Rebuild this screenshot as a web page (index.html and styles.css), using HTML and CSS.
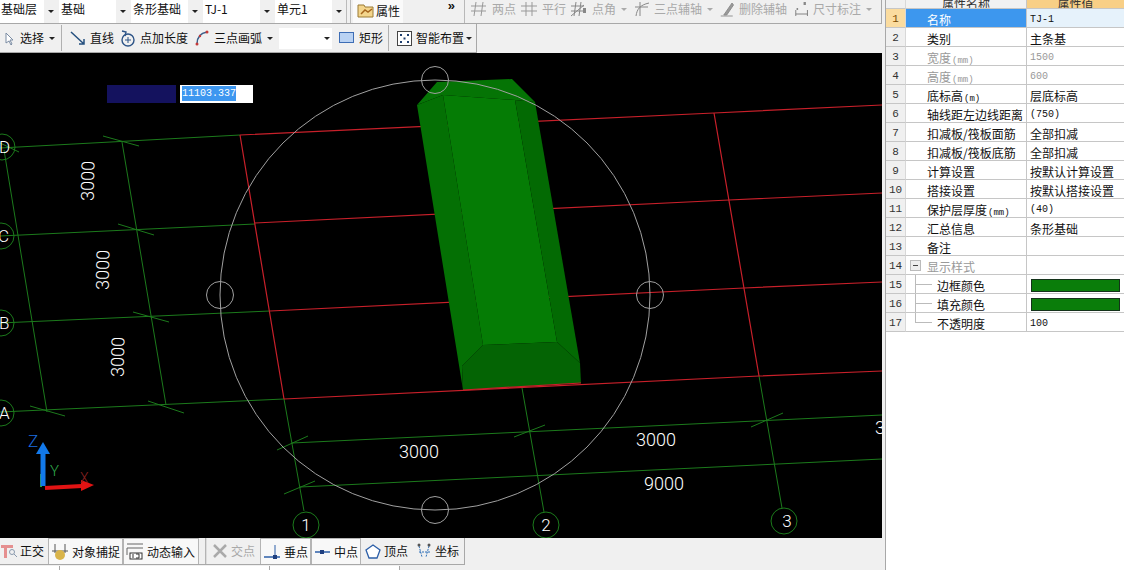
FILE: index.html
```html
<!DOCTYPE html>
<html lang="zh">
<head>
    <meta charset="UTF-8">
    <meta name="viewport" content="width=device-width, initial-scale=1.0">
    <title>条形基础</title>
    <link rel="stylesheet" href="styles.css">
</head>
<body>
<div class="app">
    <div class="main">
        <div class="bar bar-top">
            <div class="combo first"><span class="combo-text">基础层</span><i class="caret"></i></div>
            <div class="combo"><span class="combo-text">基础</span><i class="caret"></i></div>
            <div class="combo"><span class="combo-text">条形基础</span><i class="caret"></i></div>
            <div class="combo"><span class="combo-text">TJ-1</span><i class="caret"></i></div>
            <div class="combo"><span class="combo-text">单元1</span><i class="caret"></i></div>
            <div class="grip"></div>
            <div class="prop-btn">
                <svg width="18" height="15" viewBox="0 0 18 15"><path d="M1 2h6l1 2h8v10H1z" fill="#f3d58c" stroke="#9a7b35"/><path d="M4 11l4-4 3 2 4-3" fill="none" stroke="#a5651d" stroke-width="1.5"/></svg>
                <span>属性</span>
            </div>
            <div class="more">»</div>
            <div class="axis-tools">
                <div class="tool off w50">
                    <svg width="18" height="16" viewBox="0 0 18 16"><path d="M1 5h15M1 10h15M6 1L4 15M13 1l-2 14" stroke="#999" fill="none"/></svg>
                    <span>两点</span>
                </div>
                <div class="tool off w50">
                    <svg width="18" height="16" viewBox="0 0 18 16"><path d="M1 5h16M1 10h16M6 1v14M12 1v14" stroke="#999" fill="none"/></svg>
                    <span>平行</span>
                </div>
                <div class="tool off w64">
                    <svg width="18" height="16" viewBox="0 0 18 16"><path d="M1 5h13M1 10h13M6 1L4 15M11 1L9 15M1 15L14 4" stroke="#888" fill="none"/><rect x="13" y="7" width="3" height="5" fill="#888"/></svg>
                    <span>点角</span><i class="caret pale"></i>
                </div>
                <div class="tool off w86">
                    <svg width="16" height="16" viewBox="0 0 16 16"><path d="M2 15C3 8 6 4 15 2M6 1v14M1 6h13" stroke="#888" fill="none"/></svg>
                    <span>三点辅轴</span><i class="caret pale"></i>
                </div>
                <div class="tool off w75">
                    <svg width="15" height="16" viewBox="0 0 20 16" preserveAspectRatio="none"><path d="M1 15h16M5 14L16 2l2 2L9 14z" fill="#999" stroke="#888"/></svg>
                    <span>删除辅轴</span>
                </div>
                <div class="tool off w80">
                    <svg width="14" height="16" viewBox="0 0 18 16" preserveAspectRatio="none"><path d="M1 9v6M16 9v6M1 13h15" stroke="#777" fill="none"/><rect x="11" y="1" width="3" height="3" fill="#888"/><rect x="2" y="7" width="2" height="2" fill="#888"/></svg>
                    <span>尺寸标注</span><i class="caret pale"></i>
                </div>
            </div>
        </div>

        <div class="bar bar-draw">
            <div class="tool w58">
                <svg width="12" height="15" viewBox="0 0 12 15"><path d="M3 2v10l3-2 2 4 1-1-2-4h3z" fill="#fff" stroke="#7b8ca3"/></svg>
                <span class="ml1">选择</span><i class="caret"></i>
            </div>
            <div class="sep"></div>
            <div class="tool w50">
                <svg width="16" height="16" viewBox="0 0 16 16"><path d="M1 2l13 12M14 9v5H9" fill="none" stroke="#25507f" stroke-width="1.5"/></svg>
                <span>直线</span>
            </div>
            <div class="tool w75">
                <svg width="16" height="17" viewBox="0 0 16 17"><circle cx="8" cy="10" r="6" fill="none" stroke="#2d5487" stroke-width="1.4"/><path d="M5 10h6M8 7v6" stroke="#2d5487"/><path d="M2 1l4 1-1 4" fill="none" stroke="#2d5487" stroke-width="1.4"/></svg>
                <span>点加长度</span>
            </div>
            <div class="tool w84">
                <svg width="14" height="16" viewBox="0 0 14 16"><path d="M2 14C2 7 6 3 12 2" fill="none" stroke="#3b5f8a" stroke-width="1.5"/><circle cx="2" cy="14" r="1.5" fill="#c43a3a"/><circle cx="12" cy="2" r="1.5" fill="#c43a3a"/><circle cx="5" cy="6" r="1.2" fill="#c43a3a"/></svg>
                <span class="ml1">三点画弧</span><i class="caret"></i>
            </div>
            <div class="combo small"><span class="combo-text"></span><i class="caret"></i></div>
            <div class="tool w49">
                <svg width="16" height="12" viewBox="0 0 16 12"><rect x=".5" y=".5" width="14" height="10" fill="#b9d2f3" stroke="#3d6db5"/></svg>
                <span>矩形</span>
            </div>
            <div class="sep"></div>
            <div class="tool w84">
                <svg width="15" height="15" viewBox="0 0 15 15"><rect x=".5" y=".5" width="14" height="14" fill="#fff" stroke="#444"/><path d="M3 3h2v2H3zM10 3h2v2h-2zM6.500 6.500h2v2h-2zM3 10h2v2H3zM10 10h2v2h-2z" fill="#1f3f6f"/></svg>
                <span>智能布置</span><i class="caret tight"></i>
            </div>
        </div>

        <div class="canvas">
            <svg class="scene" width="882" height="485" viewBox="0 53 882 485">
                <g class="axis-green">
                    <path d="M0 148L240 135M0 236L255 224M0 323L270 311M0 412L284 399"/>
                    <path d="M4 150L47 412M122 142L166 405"/>
                    <path d="M0 143L19 152M103 136L139 146M118 224L154 235M133 312L169 322M148 401L184 413M30 406L65 416"/>
                    <path d="M284 399L304 511M522 388L544 512M759 376L782 508"/>
                    <path d="M292 443L882 415M300 487L882 459"/>
                    <path d="M277 450L308 436M514 437L545 425M751 427L783 413M284 494L315 481"/>
                    <circle cx="2" cy="147" r="13"/>
                    <circle cx="1" cy="236" r="13"/>
                    <circle cx="1" cy="323" r="13"/>
                    <circle cx="1" cy="413" r="13"/>
                    <circle cx="306" cy="525" r="13"/>
                    <circle cx="546" cy="525" r="13"/>
                    <circle cx="784" cy="521" r="13"/>
                </g>
                <g class="axis-red">
                    <path d="M240 135L714 113L882 105M255 223L729 200L882 193M270 311L744 288L882 282M284 399L759 376L882 371"/>
                    <path d="M240 135L284 399M714 113L759 376"/>
                </g>
                <g class="solid">
                    <polygon class="f-top" points="417,105 437,82 512,79 535,102 515,100 443,95"/>
                    <polygon class="f-left" points="417,105 443,95 483,345 462,366 463,390"/>
                    <polygon class="f-mid" points="443,95 515,100 557,342 483,345"/>
                    <polygon class="f-right" points="515,100 535,102 580,363 557,342"/>
                    <polygon class="f-end" points="483,345 557,342 580,363 581,383 463,390 462,366"/>
                </g>
                <path class="axis-red" d="M463 390L581 383"/>
                <g class="snap">
                    <circle cx="435" cy="295" r="215"/>
                    <circle cx="435" cy="80" r="13.500"/>
                    <circle cx="435" cy="510" r="13.500"/>
                    <circle cx="220" cy="295" r="13.500"/>
                    <circle cx="650" cy="295" r="13.500"/>
                </g>
                <g class="dim">
                    <text x="419" y="458" text-anchor="middle">3000</text>
                    <text x="656" y="446" text-anchor="middle">3000</text>
                    <text x="664" y="490" text-anchor="middle">9000</text>
                    <text x="875" y="434">3</text>
                    <text transform="translate(94 181) rotate(-89)" text-anchor="middle">3000</text>
                    <text transform="translate(109 270) rotate(-89)" text-anchor="middle">3000</text>
                    <text transform="translate(124 357) rotate(-89)" text-anchor="middle">3000</text>
                </g>
                <g class="bubble">
                    <text x="-1" y="153">D</text>
                    <text x="-2" y="242">C</text>
                    <text x="-1" y="329">B</text>
                    <text x="-1" y="419">A</text>
                    <text x="306" y="531" text-anchor="middle">1</text>
                    <text x="546" y="531" text-anchor="middle">2</text>
                    <text x="787" y="527" text-anchor="middle">3</text>
                </g>
                <g>
                    <path d="M41 474v13" stroke="#2ea32e" stroke-width="2"/>
                    <path d="M43 486V452" stroke="#1279ea" stroke-width="5"/>
                    <path d="M43 442L36 454H50z" fill="#1279ea"/>
                    <path d="M45 488L82 486" stroke="#e21313" stroke-width="4"/>
                    <path d="M81 480L94 485L81 491z" fill="#e21313"/>
                    <text class="gizmo-z" x="28" y="447">Z</text>
                    <text class="gizmo-y" x="50" y="476">Y</text>
                    <text class="gizmo-x" x="80" y="483">X</text>
                </g>
            </svg>
            <div class="coord">
                <div class="coord-label"></div>
                <div class="coord-input"><span>11103.337</span></div>
            </div>
        </div>

        <div class="statusbar">
            <div class="stat first w48">
                <svg width="18" height="16" viewBox="0 0 18 16"><path d="M1 2h12v3H1zM4 5h3v10H4z" fill="#e58f8f"/><circle cx="12" cy="9" r="2.500" fill="none" stroke="#8a9aae"/><path d="M14 11l3 3" stroke="#8a9aae"/></svg>
                <span>正交</span>
            </div>
            <div class="stat on w75">
                <svg width="18" height="18" viewBox="0 0 18 18"><path d="M4 1v9M14 1v9M1 8h16" stroke="#555" fill="none"/><circle cx="9" cy="12" r="5" fill="#d9b44a"/></svg>
                <span>对象捕捉</span>
            </div>
            <div class="stat on w76">
                <svg width="18" height="17" viewBox="0 0 18 17"><path d="M1 1h16M1 5h16M1 5v7" stroke="#666" fill="none"/><rect x="4" y="10" width="12" height="6" fill="#fff" stroke="#333"/><path d="M7 11v4M10 11h3v4h-3" stroke="#333" fill="none"/></svg>
                <span>动态输入</span>
            </div>
            <div class="stat-sep"></div>
            <div class="stat off w50">
                <svg width="16" height="16" viewBox="0 0 16 16"><path d="M2 2l12 12M14 2L2 14" stroke="#aaa" stroke-width="2.500"/></svg>
                <span>交点</span>
            </div>
            <div class="stat on w51">
                <svg width="18" height="16" viewBox="0 0 18 16"><path d="M1 13h16" stroke="#2d5fa8" stroke-width="1.500"/><path d="M12 1v14" stroke="#2d5fa8"/><rect x="10" y="11" width="4" height="4" fill="#1f3f7f"/></svg>
                <span>垂点</span>
            </div>
            <div class="stat on w50">
                <svg width="17" height="8" viewBox="0 0 17 8"><path d="M1 4h15" stroke="#2d5fa8" stroke-width="1.500"/><rect x="6" y="2" width="4" height="4" fill="#1f3f7f"/></svg>
                <span>中点</span>
            </div>
            <div class="stat w52 pl4">
                <svg width="16" height="15" viewBox="0 0 16 15"><path d="M8 1l7 5-3 8H4L1 6z" fill="#fff" stroke="#2d5fa8" stroke-width="1.300"/></svg>
                <span>顶点</span>
            </div>
            <div class="stat w50 last">
                <svg width="16" height="16" viewBox="0 0 16 16"><path d="M3 3l3 11M13 3l-3 11M3 9h11" stroke="#2d6fb8" stroke-dasharray="2 1" fill="none"/><circle cx="3" cy="2" r="1.500" fill="#555"/><circle cx="13" cy="2" r="1.500" fill="#555"/></svg>
                <span>坐标</span>
            </div>
        </div>
        <div class="strip">
            <div class="strip-cell w60"></div>
            <div class="strip-cell w210"></div>
            <div class="strip-cell w130"></div>
        </div>
    </div>

    <div class="panel">
        <div class="sheet">
            <table class="props">
                <tr class="head">
                    <th class="no"></th>
                    <th class="name"><div>属性名称</div></th>
                    <th class="val"><div>属性值</div></th>
                </tr>
                <tr class="current">
                    <td class="no">1</td><td class="name">名称</td><td class="val mono">TJ-1</td>
                </tr>
                <tr><td class="no">2</td><td class="name">类别</td><td class="val">主条基</td></tr>
                <tr class="grey"><td class="no">3</td><td class="name">宽度<small>(mm)</small></td><td class="val mono">1500</td></tr>
                <tr class="grey"><td class="no">4</td><td class="name">高度<small>(mm)</small></td><td class="val mono">600</td></tr>
                <tr><td class="no">5</td><td class="name">底标高<small>(m)</small></td><td class="val">层底标高</td></tr>
                <tr><td class="no">6</td><td class="name">轴线距左边线距离</td><td class="val mono">(750)</td></tr>
                <tr><td class="no">7</td><td class="name">扣减板/筏板面筋</td><td class="val">全部扣减</td></tr>
                <tr><td class="no">8</td><td class="name">扣减板/筏板底筋</td><td class="val">全部扣减</td></tr>
                <tr><td class="no">9</td><td class="name">计算设置</td><td class="val">按默认计算设置</td></tr>
                <tr><td class="no">10</td><td class="name">搭接设置</td><td class="val">按默认搭接设置</td></tr>
                <tr><td class="no">11</td><td class="name">保护层厚度<small>(mm)</small></td><td class="val mono">(40)</td></tr>
                <tr><td class="no">12</td><td class="name">汇总信息</td><td class="val">条形基础</td></tr>
                <tr><td class="no">13</td><td class="name">备注</td><td class="val"></td></tr>
                <tr class="grey"><td class="no">14</td><td class="name group"><i class="minus"></i>显示样式</td><td class="val"></td></tr>
                <tr><td class="no">15</td><td class="name child">边框颜色</td><td class="val"><div class="swatch"></div></td></tr>
                <tr><td class="no">16</td><td class="name child">填充颜色</td><td class="val"><div class="swatch"></div></td></tr>
                <tr><td class="no">17</td><td class="name child end">不透明度</td><td class="val mono">100</td></tr>
            </table>
        </div>
    </div>
</div>
</body>
</html>
```

FILE: styles.css
```css
html, body {
    margin: 0;
    height: 100%;
    overflow: hidden;
}
body {
    font-family: "Noto Sans CJK SC", "Liberation Sans", sans-serif;
    font-size: 12px;
    line-height: 16px;
    color: #111;
    background: #f0f0f0;
}
.app {
    display: flex;
    width: 1124px;
    height: 570px;
}
.main {
    width: 882px;
    display: flex;
    flex-direction: column;
    background: #f0f0f0;
}

/* toolbars */
.bar {
    display: flex;
    align-items: center;
    box-sizing: border-box;
}
.bar-top {
    height: 24px;
    border-bottom: 1px solid #a8a8a8;
}
.bar-draw {
    height: 29px;
    width: 477px;
    border-right: 1px solid #a8a8a8;
    border-bottom: 1px solid #a8a8a8;
    padding-left: 3px;
}
.combo {
    display: flex;
    align-items: center;
    width: 72px;
    height: 23px;
    flex: none;
}
.combo.first {
    width: 59px;
}
.combo-text {
    flex: 1;
    height: 100%;
    line-height: 18px;
    background: #fff;
    white-space: nowrap;
    overflow: hidden;
    padding-left: 2px;
}
.first .combo-text {
    padding-left: 1px;
}
.combo .caret {
    margin: 0 5px 0 4px;
}
.combo.small {
    width: 60px;
    height: 21px;
}
.combo.small .caret {
    margin: 0 9px 0 -8px;
}
.caret {
    display: inline-block;
    flex: none;
    width: 0;
    height: 0;
    border-left: 3px solid transparent;
    border-right: 3px solid transparent;
    border-top: 3px solid #222;
    margin-left: 1px;
}
.caret.pale {
    border-top-color: #aaa;
}
.caret.tight {
    margin-left: -2px;
}
.grip {
    width: 3px;
    height: 23px;
    margin: 0 2px 0 -1px;
    border-left: 1px solid #bbb;
    border-right: 1px solid #bbb;
    flex: none;
}
.prop-btn {
    display: flex;
    align-items: center;
    gap: 1px;
    width: 50px;
    height: 23px;
    padding: 0 0 2px 4px;
    box-sizing: border-box;
    background: #fafafa;
    white-space: nowrap;
    flex: none;
}
.more {
    width: 61px;
    flex: none;
    height: 23px;
    text-align: right;
    padding-right: 9px;
    box-sizing: border-box;
    font-size: 13px;
    line-height: 12px;
    font-family: "Liberation Sans", sans-serif;
    font-weight: bold;
}
.axis-tools {
    display: flex;
    align-items: center;
    flex: 1;
    height: 23px;
    box-sizing: border-box;
    border-left: 1px solid #b8b8b8;
    border-right: 1px solid #a8a8a8;
    padding: 0 0 5px 5px;
}
.tool {
    display: flex;
    align-items: center;
    gap: 4px;
    flex: none;
    height: 100%;
    white-space: nowrap;
}
.tool.off, .stat.off {
    color: #a9a9a9;
}
.ml1 {
    margin-left: 1px;
}
.w48 { width: 48px; }
.w49 { width: 49px; }
.w50 { width: 50px; }
.w51 { width: 51px; }
.w52 { width: 52px; }
.w58 { width: 58px; }
.w60 { width: 60px; }
.w64 { width: 64px; }
.w75 { width: 75px; }
.w76 { width: 76px; }
.w80 { width: 80px; }
.w84 { width: 84px; }
.w86 { width: 86px; }
.w130 { width: 130px; }
.w210 { width: 210px; }
.sep {
    width: 1px;
    height: 26px;
    background: #b0b0b0;
    margin: 0 8px 0 0;
    flex: none;
}

/* drawing area */
.canvas {
    position: relative;
    height: 485px;
    background: #000;
    flex: none;
}
.scene {
    display: block;
}
.scene text {
    font-family: Roboto, "Liberation Sans", sans-serif;
    font-weight: 300;
}
.axis-green path, .axis-green circle {
    fill: none;
    stroke: #1c7a1c;
    stroke-width: 1;
}
.axis-red path, path.axis-red {
    fill: none;
    stroke: #c8202a;
    stroke-width: 1.2;
}
.f-top { fill: #057405; }
.f-left { fill: #047004; }
.f-mid { fill: #057c05; }
.f-right { fill: #036a03; }
.f-end { fill: #046404; }
.snap circle {
    fill: none;
    stroke: #a0a0a0;
    stroke-width: 1;
}
.dim text {
    fill: #fff;
    font-size: 18px;
}
.bubble text {
    fill: #fff;
    font-size: 17px;
}
.scene .gizmo-z {
    fill: #1c6fe0;
    font-size: 17px;
}
.scene .gizmo-y {
    fill: #2fa84a;
    font-size: 15px;
}
.scene .gizmo-x {
    fill: #8a2020;
    font-size: 14px;
}
.coord {
    position: absolute;
    left: 107px;
    top: 32px;
    display: flex;
    gap: 4px;
    height: 18px;
}
.coord-label {
    width: 69px;
    background: #14125e;
}
.coord-input {
    width: 73px;
    background: #fff;
    padding: 1px 0 0 2px;
    box-sizing: border-box;
    font-family: "Liberation Mono", monospace;
    font-size: 10px;
    line-height: 15px;
}
.coord-input span {
    display: inline-block;
    background: #3d97f0;
    color: #fff;
}

/* status bar */
.statusbar {
    display: flex;
    height: 27px;
    width: 465px;
    box-sizing: border-box;
    border-bottom: 1px solid #a8a8a8;
    border-right: 1px solid #a8a8a8;
    flex: none;
}
.stat {
    display: flex;
    align-items: center;
    gap: 3px;
    box-sizing: border-box;
    padding-left: 2px;
    flex: none;
    white-space: nowrap;
    overflow: hidden;
}
.stat.first {
    padding-left: 0;
    gap: 2px;
}
.stat.on {
    border: 1px solid #b4b4b4;
    border-bottom: 0;
    background: #f8f8f8;
}
.stat.pl4 {
    padding-left: 4px;
}
.stat.last {
    flex: 1;
    padding-left: 3px;
}
.stat-sep {
    width: 2px;
    margin: 0 3px 0 6px;
    border-left: 1px solid #b4b4b4;
    border-right: 1px solid #dcdcdc;
    box-sizing: border-box;
    flex: none;
}
.strip {
    flex: 1;
    display: flex;
    align-items: stretch;
    width: 400px;
    background: #fff;
    margin-top: 1px;
}
.strip-cell {
    box-sizing: border-box;
    border-right: 1px solid #a8a8a8;
}

/* property sheet */
.panel {
    width: 242px;
    padding-left: 3px;
    box-sizing: border-box;
    background: #f0f0f0;
    flex: none;
}
.sheet {
    height: 100%;
    background: #fff;
    border-left: 1px solid #a8a8a8;
}
.props {
    border-collapse: separate;
    border-spacing: 0;
    table-layout: fixed;
    width: 238px;
}
.props td, .props th {
    padding: 0;
    height: 19px;
    box-sizing: border-box;
    border-bottom: 1px solid #c6c6c6;
    white-space: nowrap;
    overflow: hidden;
    font-weight: normal;
    line-height: 15px;
}
.props .no {
    width: 20px;
    padding-top: 2px;
    background: #f0f0f0;
    text-align: center;
    font-family: "Liberation Mono", monospace;
    font-size: 11px;
    color: #333;
    border-right: 1px solid #d8d8d8;
}
.props .name {
    width: 121px;
    padding: 3px 0 0 21px;
    border-right: 1px solid #c6c6c6;
    position: relative;
}
.props .val {
    padding: 2px 0 0 3px;
}
.props .mono {
    padding-top: 3px;
    font-family: "Liberation Mono", monospace;
    font-size: 10px;
}
.props small {
    font-family: "Liberation Mono", monospace;
    font-size: 9px;
    line-height: 0;
    margin-left: 1px;
}
.props .head th {
    height: 9px;
    padding: 0;
}
.props .head .name {
    background: #f2f2f2;
}
.props .head .val {
    background: #f8cf86;
}
.props .head div {
    height: 8px;
    margin-top: -8px;
    line-height: 16px;
    text-align: center;
    color: #333;
}
.props .current .no {
    background: #fbdc9f;
    color: #7a4a00;
}
.props .current .name {
    background: #3d97ee;
    color: #fff;
}
.props .current .val {
    background: #e6f2fb;
}
.grey .name, .grey .val {
    color: #999;
}
.minus {
    position: absolute;
    left: 4px;
    top: 4px;
    width: 11px;
    height: 11px;
    box-sizing: border-box;
    border: 1px solid #bbb;
    background: #eee;
}
.minus::after {
    content: "";
    position: absolute;
    left: 2px;
    right: 2px;
    top: 4px;
    height: 1px;
    background: #444;
}
.props .child {
    padding-left: 31px;
}
.child::before {
    content: "";
    position: absolute;
    left: 9px;
    top: 0;
    bottom: 0;
    width: 1px;
    background: #bbb;
}
.child::after {
    content: "";
    position: absolute;
    left: 9px;
    top: 9px;
    width: 17px;
    height: 1px;
    background: #bbb;
}
.child.end::before {
    bottom: 9px;
}
.props .val .swatch {
    width: 89px;
    height: 13px;
    margin: 0 0 0 1px;
    background: #0a7d0a;
    border: 1px solid #14321a;
    box-sizing: border-box;
}
```
